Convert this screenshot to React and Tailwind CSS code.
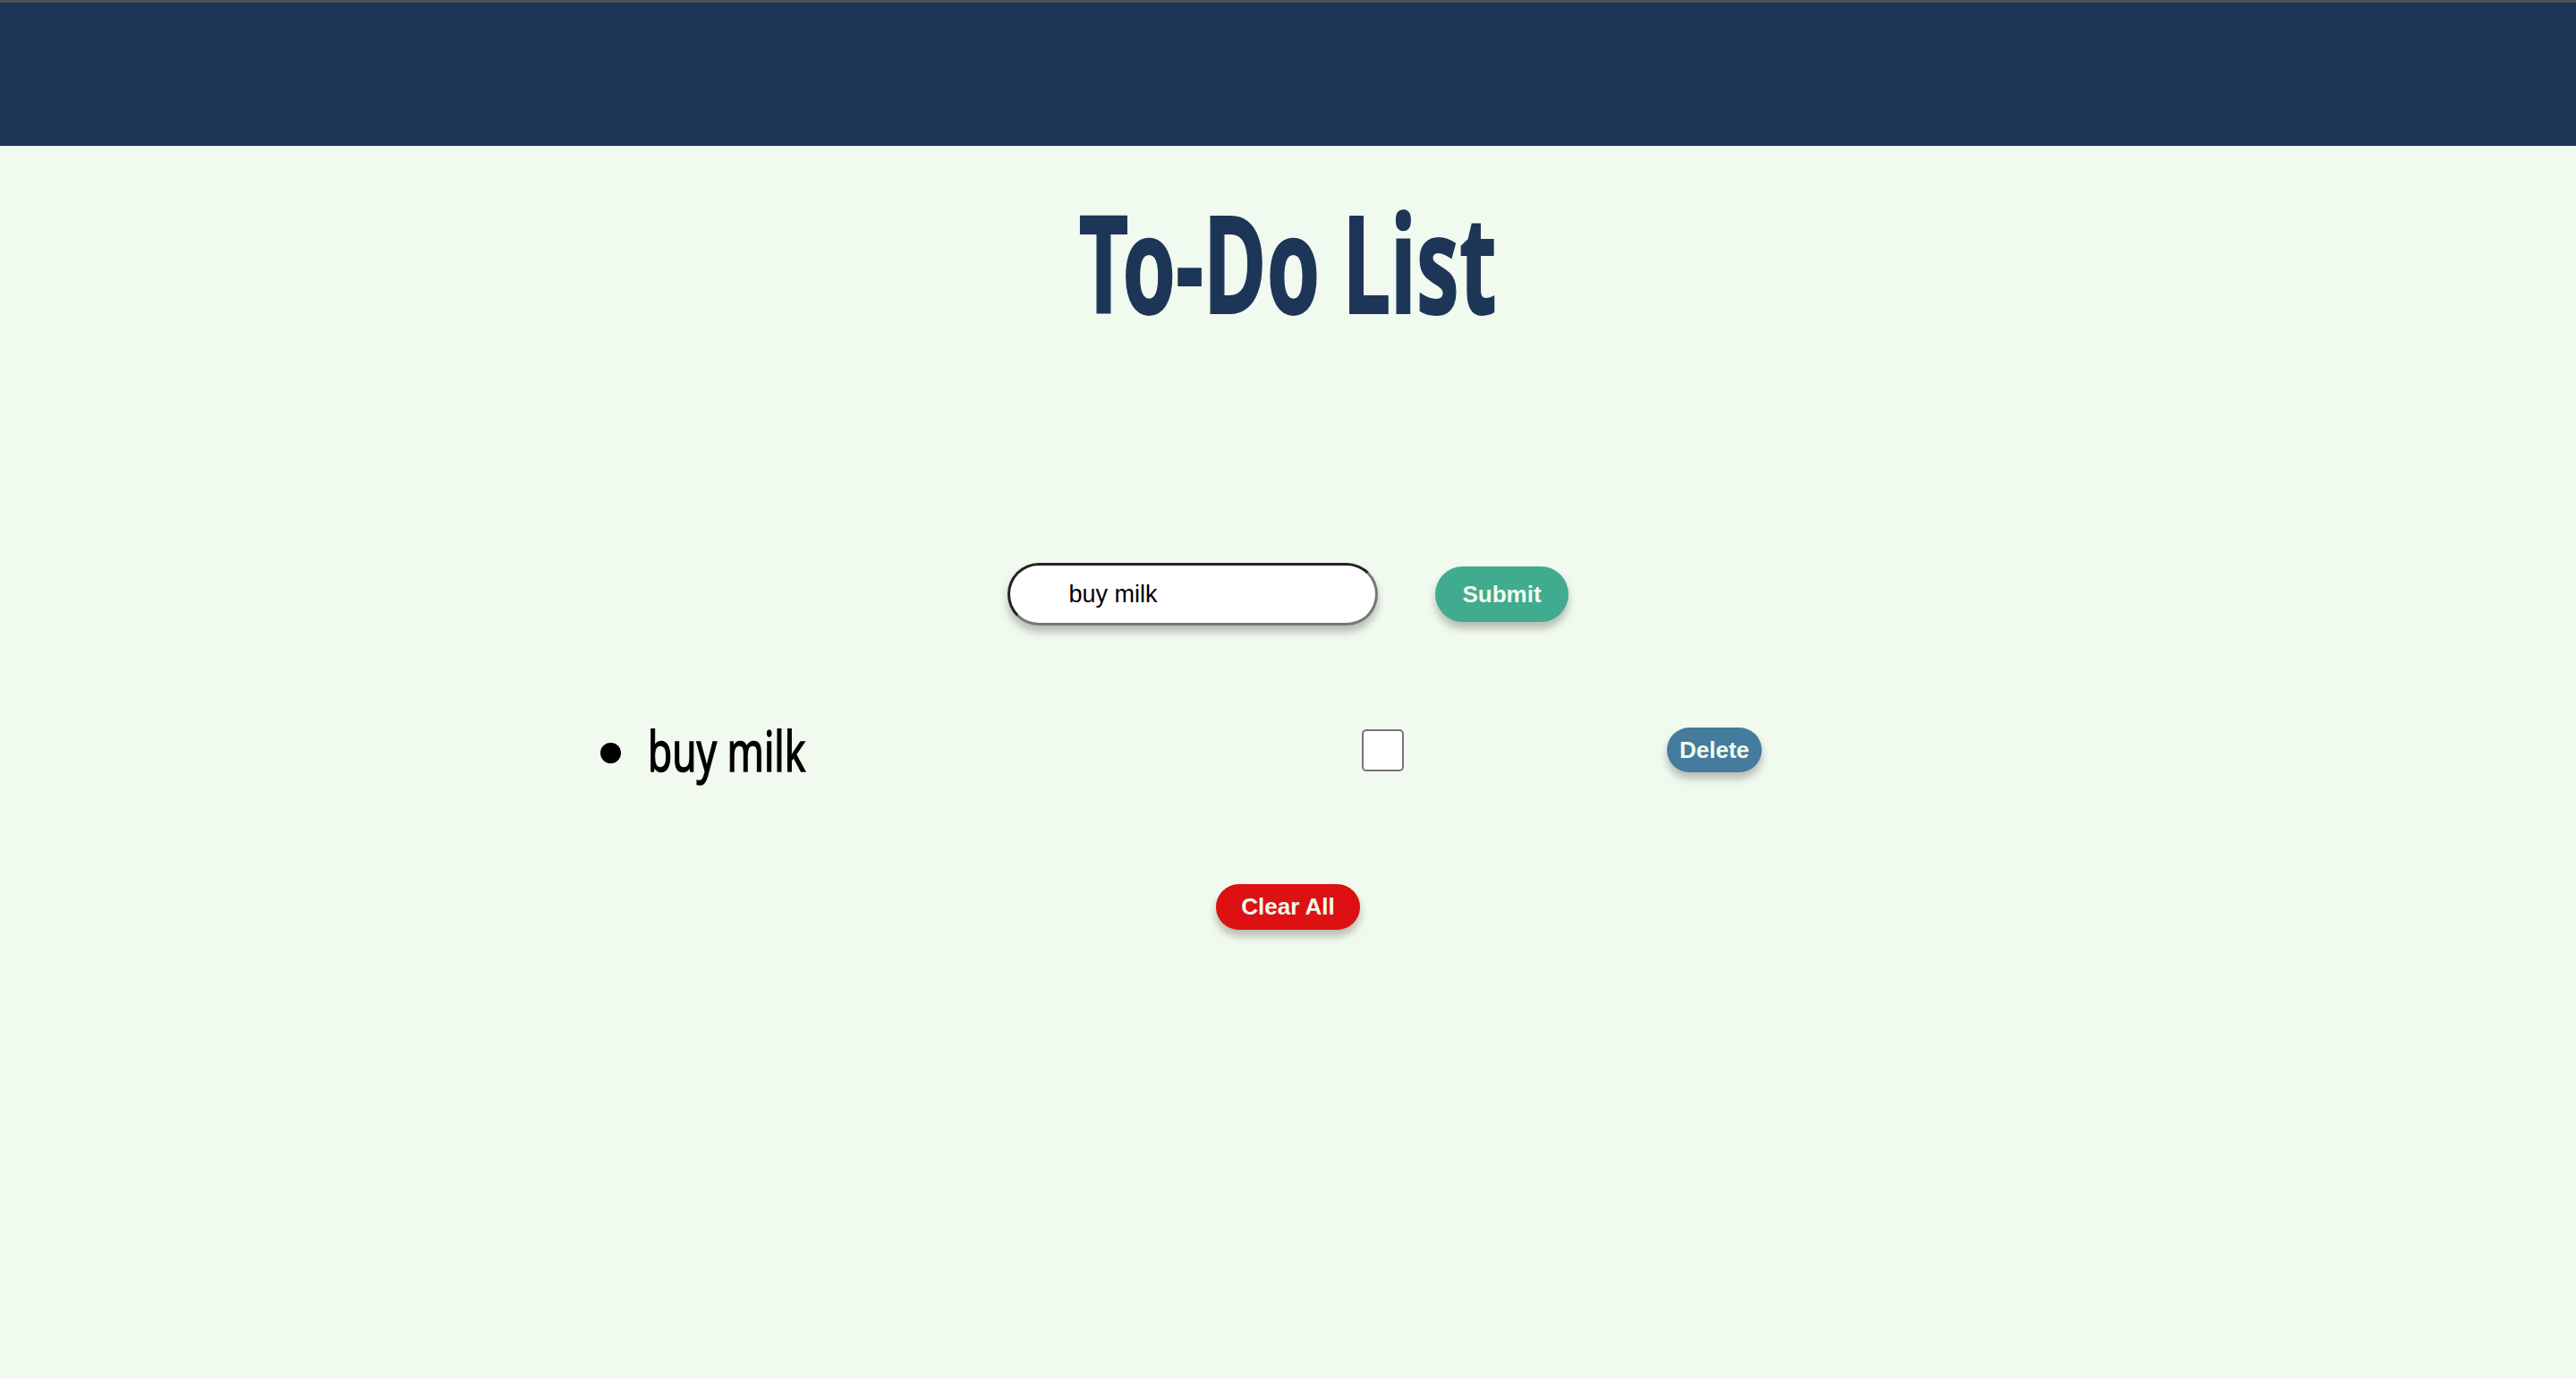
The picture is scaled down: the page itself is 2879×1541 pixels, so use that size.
import React from "react";

export default function App() {
  return (
    <div className="min-h-[1541px] bg-[#f1faee] flex flex-col">
      <header className="h-[163px] bg-[#1d3557] border-t-[3px] border-[#4d4f53] shrink-0" />
      <main className="flex flex-col">
        <h1 className="mt-[53px] h-[151px] text-center leading-none">
          <span
            className="inline-block origin-center scale-x-[0.636] text-[151px] leading-none font-bold text-[#1d3557] [-webkit-text-stroke:2px_#1d3557]"
            style={{ fontFamily: '"Noto Sans", sans-serif' }}
          >
            To-Do List
          </span>
        </h1>

        <form
          className="mt-[262px] h-[70px] flex items-center justify-center gap-[64px]"
          onSubmit={(e) => e.preventDefault()}
        >
          <input
            type="text"
            defaultValue="buy milk"
            className="w-[414px] h-[70px] rounded-full bg-white border-[3px] border-t-[#222222] border-l-[#222222] border-b-[#767676] border-r-[#767676] pl-[65px] pr-4 text-[27px] text-black outline-none shadow-[0_7px_10px_rgba(0,0,0,0.25)]"
            style={{ fontFamily: '"Liberation Sans", Arial, sans-serif' }}
          />
          <button
            type="submit"
            className="h-[62px] px-[30px] rounded-full bg-[#41ab8f] text-[#f1faee] text-[26px] font-bold shadow-[0_7px_10px_rgba(0,0,0,0.25)]"
            style={{ fontFamily: '"Liberation Sans", Arial, sans-serif' }}
          >
            Submit
          </button>
        </form>

        <ul className="mt-[114px] pl-[671px]">
          <li className="flex items-center h-[50px]">
            <span className="w-[23px] h-[23px] rounded-full bg-black shrink-0 mt-[6px]" />
            <span className="ml-[30px] w-[798px] shrink-0">
              <span
                className="inline-block origin-left scale-x-[0.713] text-[62px] leading-none text-black [-webkit-text-stroke:1.5px_black]"
                style={{ fontFamily: '"Noto Sans", sans-serif' }}
              >
                buy milk
              </span>
            </span>
            <input
              type="checkbox"
              className="appearance-none w-[47px] h-[47px] border-2 border-[#767676] rounded-[5px] bg-white shrink-0"
            />
            <button
              className="ml-[294px] h-[50px] px-[14px] rounded-full bg-[#457b9d] text-[#f1faee] text-[26px] font-bold shadow-[0_7px_10px_rgba(0,0,0,0.25)]"
              style={{ fontFamily: '"Liberation Sans", Arial, sans-serif' }}
            >
              Delete
            </button>
          </li>
        </ul>

        <div className="mt-[125px] flex justify-center">
          <button
            className="h-[51px] px-[28px] rounded-full bg-[#dd1111] text-[#f1faee] text-[26px] font-bold shadow-[0_7px_10px_rgba(0,0,0,0.25)]"
            style={{ fontFamily: '"Liberation Sans", Arial, sans-serif' }}
          >
            Clear All
          </button>
        </div>
      </main>
    </div>
  );
}
